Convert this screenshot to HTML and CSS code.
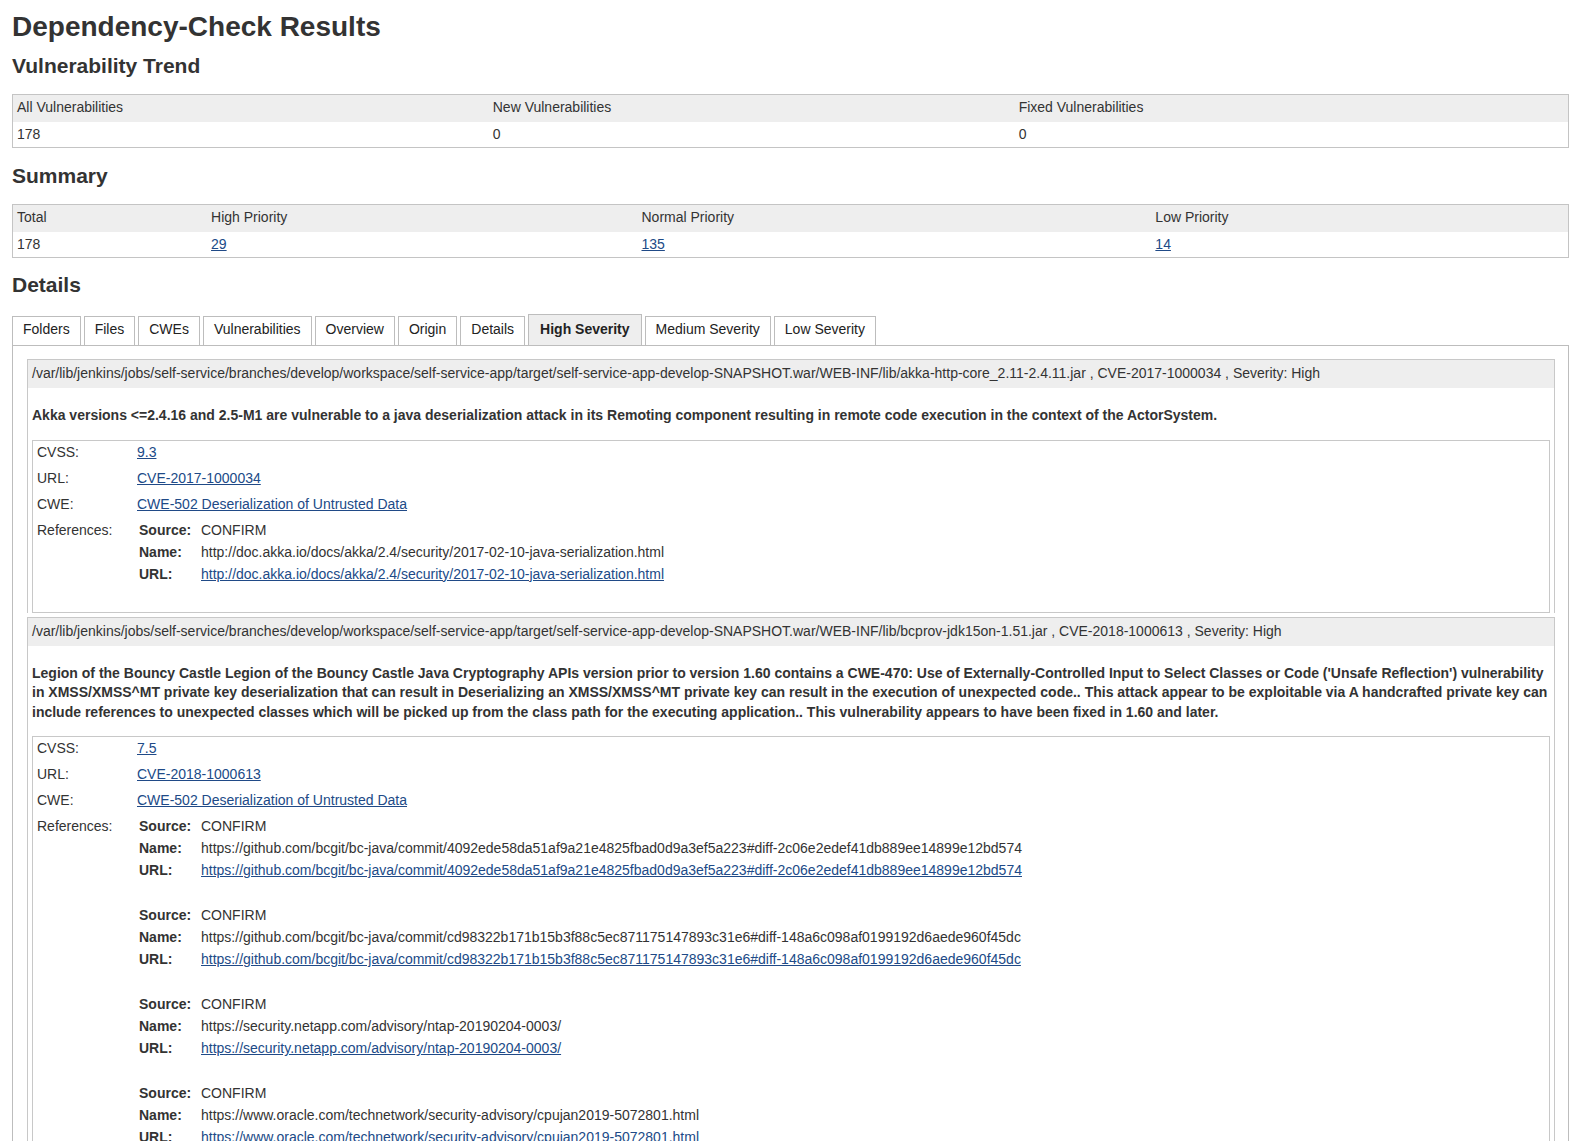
FILE: index.html
```html
<!DOCTYPE html>
<html lang="en">
<head>
<meta charset="utf-8">
<title>Dependency-Check Results</title>
<link rel="stylesheet" href="styles.css">
</head>
<body>
<h1>Dependency-Check Results</h1>

<h2 class="trend-title">Vulnerability Trend</h2>
<table class="grid">
  <thead>
    <tr><th>All Vulnerabilities</th><th>New Vulnerabilities</th><th>Fixed Vulnerabilities</th></tr>
  </thead>
  <tbody>
    <tr><td>178</td><td>0</td><td>0</td></tr>
  </tbody>
</table>

<h2 class="summary-title">Summary</h2>
<table class="grid">
  <thead>
    <tr><th>Total</th><th>High Priority</th><th>Normal Priority</th><th>Low Priority</th></tr>
  </thead>
  <tbody>
    <tr><td>178</td><td><a href="#">29</a></td><td><a href="#">135</a></td><td><a href="#">14</a></td></tr>
  </tbody>
</table>

<h2 class="details-title">Details</h2>
<div class="tabs">
  <ul class="tab-bar">
    <li class="tab">Folders</li>
    <li class="tab">Files</li>
    <li class="tab">CWEs</li>
    <li class="tab">Vulnerabilities</li>
    <li class="tab">Overview</li>
    <li class="tab">Origin</li>
    <li class="tab">Details</li>
    <li class="tab active">High Severity</li>
    <li class="tab">Medium Severity</li>
    <li class="tab">Low Severity</li>
  </ul>
  <div class="tab-content">
    <div class="vuln">
      <div class="vuln-head">/var/lib/jenkins/jobs/self-service/branches/develop/workspace/self-service-app/target/self-service-app-develop-SNAPSHOT.war/WEB-INF/lib/akka-http-core_2.11-2.4.11.jar , CVE-2017-1000034 , Severity: High</div>
      <div class="vuln-body">
        <p class="desc">Akka versions &lt;=2.4.16 and 2.5-M1 are vulnerable to a java deserialization attack in its Remoting component resulting in remote code execution in the context of the ActorSystem.</p>
        <table class="props">
          <tr><td class="key">CVSS:</td><td class="val"><a href="#">9.3</a></td></tr>
          <tr><td class="key">URL:</td><td class="val"><a href="#">CVE-2017-1000034</a></td></tr>
          <tr><td class="key">CWE:</td><td class="val"><a href="#">CWE-502 Deserialization of Untrusted Data</a></td></tr>
          <tr>
            <td class="key">References:</td>
            <td class="refs">
              <dl class="ref">
                <dt>Source:</dt><dd>CONFIRM</dd>
                <dt>Name:</dt><dd>http://doc.akka.io/docs/akka/2.4/security/2017-02-10-java-serialization.html</dd>
                <dt>URL:</dt><dd><a href="#">http://doc.akka.io/docs/akka/2.4/security/2017-02-10-java-serialization.html</a></dd>
              </dl>
            </td>
          </tr>
        </table>
      </div>
    </div>

    <div class="vuln">
      <div class="vuln-head">/var/lib/jenkins/jobs/self-service/branches/develop/workspace/self-service-app/target/self-service-app-develop-SNAPSHOT.war/WEB-INF/lib/bcprov-jdk15on-1.51.jar , CVE-2018-1000613 , Severity: High</div>
      <div class="vuln-body">
        <p class="desc">Legion of the Bouncy Castle Legion of the Bouncy Castle Java Cryptography APIs version prior to version 1.60 contains a CWE-470: Use of Externally-Controlled Input to Select Classes or Code ('Unsafe Reflection') vulnerability in XMSS/XMSS^MT private key deserialization that can result in Deserializing an XMSS/XMSS^MT private key can result in the execution of unexpected code.. This attack appear to be exploitable via A handcrafted private key can include references to unexpected classes which will be picked up from the class path for the executing application.. This vulnerability appears to have been fixed in 1.60 and later.</p>
        <table class="props">
          <tr><td class="key">CVSS:</td><td class="val"><a href="#">7.5</a></td></tr>
          <tr><td class="key">URL:</td><td class="val"><a href="#">CVE-2018-1000613</a></td></tr>
          <tr><td class="key">CWE:</td><td class="val"><a href="#">CWE-502 Deserialization of Untrusted Data</a></td></tr>
          <tr>
            <td class="key">References:</td>
            <td class="refs">
              <dl class="ref">
                <dt>Source:</dt><dd>CONFIRM</dd>
                <dt>Name:</dt><dd>https://github.com/bcgit/bc-java/commit/4092ede58da51af9a21e4825fbad0d9a3ef5a223#diff-2c06e2edef41db889ee14899e12bd574</dd>
                <dt>URL:</dt><dd><a href="#">https://github.com/bcgit/bc-java/commit/4092ede58da51af9a21e4825fbad0d9a3ef5a223#diff-2c06e2edef41db889ee14899e12bd574</a></dd>
              </dl>
              <dl class="ref">
                <dt>Source:</dt><dd>CONFIRM</dd>
                <dt>Name:</dt><dd>https://github.com/bcgit/bc-java/commit/cd98322b171b15b3f88c5ec871175147893c31e6#diff-148a6c098af0199192d6aede960f45dc</dd>
                <dt>URL:</dt><dd><a href="#">https://github.com/bcgit/bc-java/commit/cd98322b171b15b3f88c5ec871175147893c31e6#diff-148a6c098af0199192d6aede960f45dc</a></dd>
              </dl>
              <dl class="ref">
                <dt>Source:</dt><dd>CONFIRM</dd>
                <dt>Name:</dt><dd>https://security.netapp.com/advisory/ntap-20190204-0003/</dd>
                <dt>URL:</dt><dd><a href="#">https://security.netapp.com/advisory/ntap-20190204-0003/</a></dd>
              </dl>
              <dl class="ref">
                <dt>Source:</dt><dd>CONFIRM</dd>
                <dt>Name:</dt><dd>https://www.oracle.com/technetwork/security-advisory/cpujan2019-5072801.html</dd>
                <dt>URL:</dt><dd><a href="#">https://www.oracle.com/technetwork/security-advisory/cpujan2019-5072801.html</a></dd>
              </dl>
            </td>
          </tr>
        </table>
      </div>
    </div>
  </div>
</div>
</body>
</html>
```

FILE: styles.css
```css
html, body {
  background: #fff;
}

body {
  margin: 0;
  padding: 0 12px 20px;
  font-family: "Liberation Sans", Arial, Helvetica, sans-serif;
  font-size: 14px;
  line-height: 18px;
  color: #333;
}

a {
  color: #204a87;
  text-decoration: underline;
}

h1 {
  font-size: 28px;
  line-height: 32px;
  font-weight: bold;
  margin: 11px 0 0;
}

h2 {
  font-size: 21px;
  line-height: 24px;
  font-weight: bold;
  margin: 13px 0 16px;
}

.trend-title {
  margin-top: 11px;
}

.summary-title {
  margin-top: 16px;
}

.details-title {
  margin-top: 15px;
  margin-bottom: 17px;
}

/* summary tables */
.grid {
  width: 100%;
  border-collapse: collapse;
  border: 1px solid #c4c4c4;
  margin-bottom: 2px;
}

.grid th {
  background: #eee;
  font-weight: normal;
  text-align: left;
  padding: 3px 4px 6px;
}

.grid td {
  text-align: left;
  padding: 3px 4px 4px;
}

/* tabs */
.tab-bar {
  display: flex;
  align-items: flex-end;
  gap: 3px;
  list-style: none;
  margin: 0;
  padding: 0;
}

.tab {
  border: 1px solid #bdbdbd;
  border-bottom: none;
  padding: 3px 10px 7px;
  color: #222;
}

.tab.active {
  background: #eee;
  font-weight: bold;
  padding: 5px 11px 7px;
}

.tab-content {
  border: 1px solid #bdbdbd;
  padding: 13px 13px 14px 14px;
}

/* vulnerability panels */
.vuln {
  border: 1px solid #c8c8c8;
  border-bottom: none;
}

.vuln-head {
  background: #eee;
  padding: 4px 4px 6px;
  line-height: 18px;
}

.vuln-body {
  padding: 0 4px;
}

.desc {
  font-weight: bold;
  line-height: 19.6px;
  margin: 18px 0 14px;
}

.props {
  width: 100%;
  border-collapse: collapse;
  border: 1px solid #c8c8c8;
  margin-bottom: 4px;
}

.props td {
  vertical-align: top;
  text-align: left;
}

.props .key {
  width: 92px;
  padding: 2px 4px 6px;
}

.props .val {
  padding: 2px 4px 6px;
}

.props .refs {
  padding: 0 4px 4px;
}

.ref {
  display: grid;
  grid-template-columns: 62px 1fr;
  margin: 0 0 23px;
  padding-left: 2px;
  line-height: 22px;
}

.ref dt {
  font-weight: bold;
}

.ref dd {
  margin: 0;
}
```
